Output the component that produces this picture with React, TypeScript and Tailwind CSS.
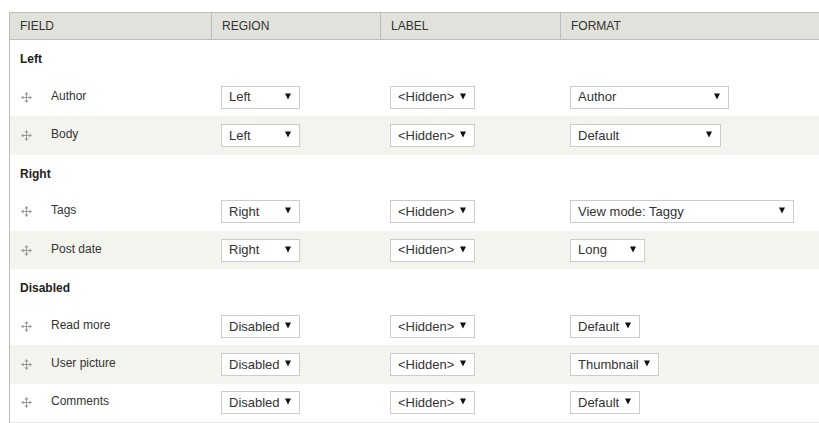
const font = "font-['Liberation_Sans',Arial,sans-serif]";

type FieldRow = {
  name: string;
  region: string;
  format: string;
  formatWidth: string;
};

const sections: { title: string; rows: FieldRow[] }[] = [
  {
    title: 'Left',
    rows: [
      { name: 'Author', region: 'Left', format: 'Author', formatWidth: 'w-[159px]' },
      { name: 'Body', region: 'Left', format: 'Default', formatWidth: 'w-[151px]' },
    ],
  },
  {
    title: 'Right',
    rows: [
      { name: 'Tags', region: 'Right', format: 'View mode: Taggy', formatWidth: 'w-[224px]' },
      { name: 'Post date', region: 'Right', format: 'Long', formatWidth: 'w-[75px]' },
    ],
  },
  {
    title: 'Disabled',
    rows: [
      { name: 'Read more', region: 'Disabled', format: 'Default', formatWidth: 'w-[70px]' },
      { name: 'User picture', region: 'Disabled', format: 'Thumbnail', formatWidth: 'w-[89px]' },
      { name: 'Comments', region: 'Disabled', format: 'Default', formatWidth: 'w-[70px]' },
    ],
  },
];

function DragHandle() {
  return (
    <svg width="11" height="11" viewBox="0 0 11 11" className="shrink-0">
      <g stroke="#9a9a9a" strokeWidth="1" fill="none">
        <line x1="5.5" y1="1" x2="5.5" y2="10" />
        <line x1="1" y1="5.5" x2="10" y2="5.5" />
      </g>
      <g fill="#9a9a9a">
        <polygon points="5.5,0 3.5,2.5 7.5,2.5" />
        <polygon points="5.5,11 3.5,8.5 7.5,8.5" />
        <polygon points="0,5.5 2.5,3.5 2.5,7.5" />
        <polygon points="11,5.5 8.5,3.5 8.5,7.5" />
      </g>
    </svg>
  );
}

function FakeSelect({ value, width }: { value: string; width: string }) {
  return (
    <div
      className={`flex h-[23px] items-center justify-between border border-[#cccccc] bg-white pl-[7px] pr-[8px] text-[13px] text-[#333] ${width}`}
    >
      <span className="whitespace-nowrap">{value}</span>
      <svg width="6" height="7" viewBox="0 0 6 7" className="shrink-0 -mt-[2px]">
        <polygon points="0,0.5 6,0.5 3,6.5" fill="#111" />
      </svg>
    </div>
  );
}

const cols = 'grid grid-cols-[202px_169px_180px_1fr]';

export default function App() {
  return (
    <div className={`h-[423px] w-[819px] overflow-hidden bg-white pt-[12px] ${font}`}>
      <div className="ml-[9px] w-[830px] border-l border-[#bfbfba]">
        {/* Header */}
        <div
          className={`${cols} h-[28px] border-y border-[#bfbfba] bg-[#e1e2dc] text-[12px] uppercase text-[#333]`}
        >
          <div className="flex items-center border-r border-[#bfbfba] pl-[10px]">Field</div>
          <div className="flex items-center border-r border-[#bfbfba] pl-[10px]">Region</div>
          <div className="flex items-center border-r border-[#bfbfba] pl-[10px]">Label</div>
          <div className="flex items-center pl-[10px]">Format</div>
        </div>

        {sections.map((section) => (
          <div key={section.title}>
            <div className="flex h-[38px] items-center bg-white pl-[10px] text-[12px] font-bold text-[#222]">
              {section.title}
            </div>
            {section.rows.map((row, i) => (
              <div
                key={row.name}
                className={`${cols} h-[38.3px] items-center ${i % 2 === 1 ? 'bg-[#f3f4ee]' : 'bg-white'}`}
              >
                <div className="flex items-center pl-[11px]">
                  <DragHandle />
                  <span className="ml-[19px] -mt-[3px] text-[12px] text-[#333]">{row.name}</span>
                </div>
                <div className="pl-[9px]">
                  <FakeSelect value={row.region} width="w-[79px]" />
                </div>
                <div className="pl-[9px]">
                  <FakeSelect value="<Hidden>" width="w-[85px]" />
                </div>
                <div className="pl-[9px]">
                  <FakeSelect value={row.format} width={row.formatWidth} />
                </div>
              </div>
            ))}
          </div>
        ))}
        <div className="border-b border-[#e6e6e2]" />
      </div>
    </div>
  );
}
